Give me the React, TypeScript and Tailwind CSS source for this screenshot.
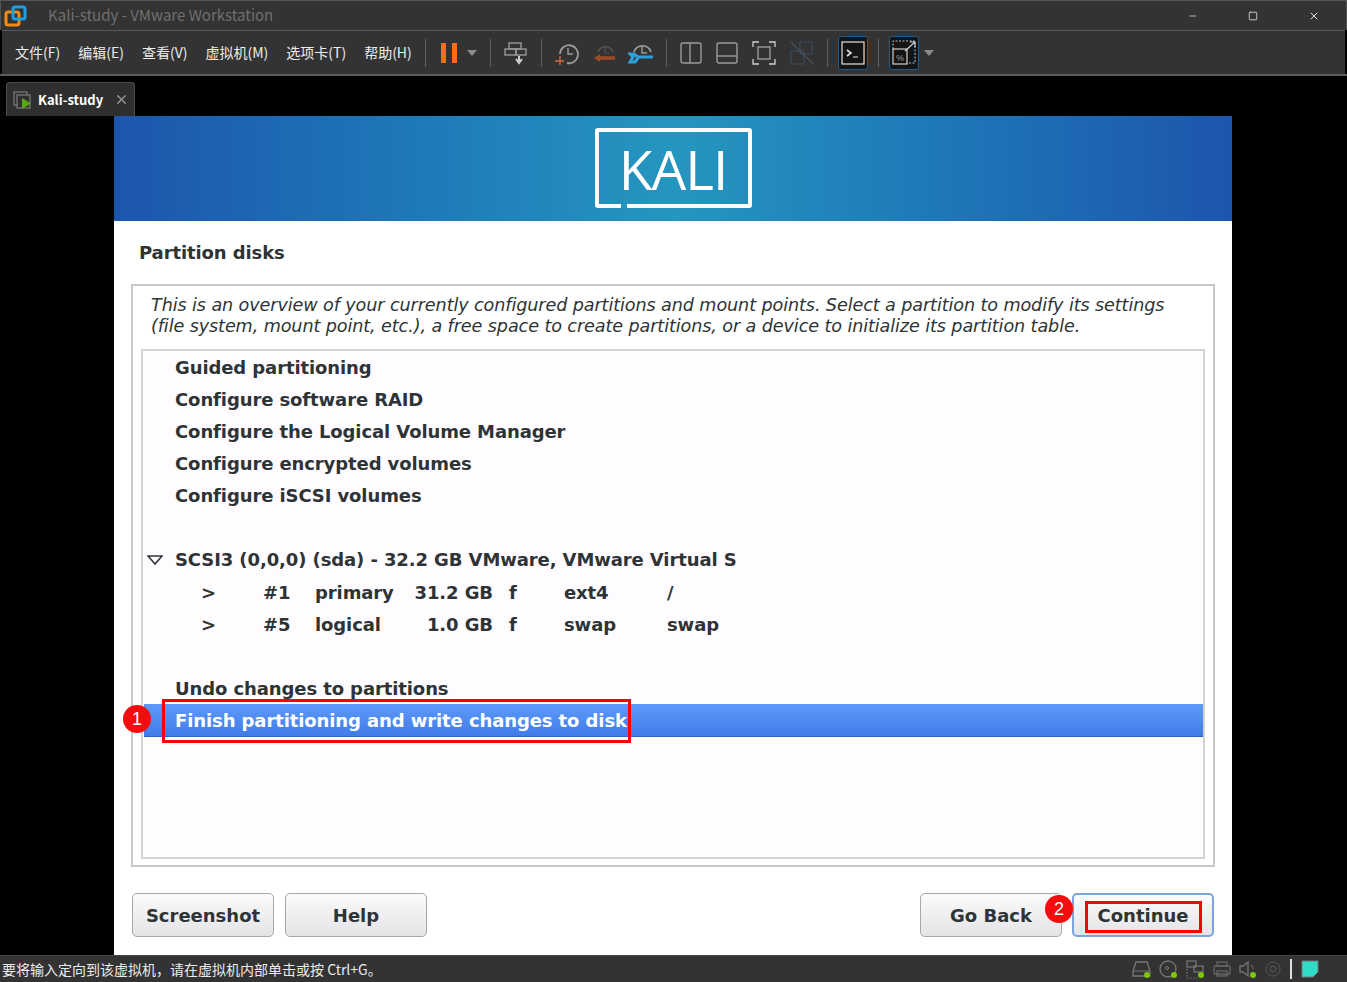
import React from 'react';
import { Minus, Square, X } from 'lucide-react';

const KALI_FONT = "font-['DejaVu_Sans',sans-serif]";
const UI_FONT = "font-['Noto_Sans_CJK_SC','Liberation_Sans',sans-serif]";

const Sep = () => <div className="w-px h-[28px] bg-[#5f5f5f] mx-[9px]" />;

const ic = { fill: 'none', stroke: '#9a9a9a', strokeWidth: 1.4 };

const ToolIcon = ({ children, w = 26 }: { children: React.ReactNode; w?: number }) => (
    <svg width={w} height="26" viewBox={`0 0 ${w} 26`} className="shrink-0">{children}</svg>
);

const Caret = () => (
    <svg width="10" height="6" viewBox="0 0 10 6" className="shrink-0"><path d="M0 0h10L5 6z" fill="#8a8a8a" /></svg>
);

const menus = ['文件(F)', '编辑(E)', '查看(V)', '虚拟机(M)', '选项卡(T)', '帮助(H)'];

const Toolbar = () => (
    <div className="h-[46px] mx-[2px] flex items-center bg-[#333333] border-t border-[#575757] pl-[13px]">
        <div className="flex items-center gap-[18px] text-[14px] text-[#ececec]">
            {menus.map((m) => <span key={m}>{m}</span>)}
        </div>
        <div className="w-px h-[28px] bg-[#5f5f5f] ml-[13px]" />
        <div className="flex gap-[6px] ml-[15px] mr-[10px]">
            <div className="w-[5px] h-[20px] bg-[#ff6a13]" />
            <div className="w-[5px] h-[20px] bg-[#ff6a13]" />
        </div>
        <Caret />
        <div className="w-px h-[28px] bg-[#5f5f5f] ml-[13px] mr-[13px]" />
        <ToolIcon w={24}>
            <g {...ic}><rect x="5" y="3" width="12" height="6" /><rect x="1" y="9" width="11" height="6" /><rect x="12" y="9" width="10" height="6" /></g>
            <path d="M15 16v5M12 19l3 4 3-4" stroke="#cfcfcf" strokeWidth="2" fill="none" />
        </ToolIcon>
        <div className="w-px h-[28px] bg-[#5f5f5f] ml-[13px] mr-[12px]" />
        <div className="flex items-center gap-[11px]">
            <ToolIcon>
                <path d="M6 14a9 9 0 1 1 7 9" {...ic} strokeWidth={1.8} /><path d="M14 8v6h5" {...ic} />
                <path d="M6 16v9M1 21h9" stroke="#d2693a" strokeWidth="1.4" />
            </ToolIcon>
            <ToolIcon>
                <path d="M7 12a8 8 0 0 1 15 0" fill="none" stroke="#555" strokeWidth="1.6" /><path d="M14 7v6h4" fill="none" stroke="#555" strokeWidth="1.2" />
                <path d="M24 18H8" stroke="#a04a22" strokeWidth="3.5" /><path d="M9 14l-6 4 6 4z" fill="#a04a22" />
            </ToolIcon>
            <ToolIcon>
                <path d="M6 12a9 9 0 0 1 17 0" {...ic} strokeWidth={1.8} /><path d="M14 6v7h5" {...ic} />
                <path d="M25 17H10M10 17l-4-3H2l3 3-3 5h5l3-4" stroke="#2f9fdc" strokeWidth="3" fill="none" />
            </ToolIcon>
        </div>
        <div className="w-px h-[28px] bg-[#5f5f5f] ml-[12px] mr-[13px]" />
        <div className="flex items-center gap-[14px]">
            <ToolIcon w={22}><rect x="1" y="3" width="20" height="20" rx="2" {...ic} /><path d="M10 3v20" {...ic} /></ToolIcon>
            <ToolIcon w={22}><rect x="1" y="3" width="20" height="20" rx="2" {...ic} /><path d="M1 16h20" {...ic} /></ToolIcon>
            <ToolIcon w={24}>
                <path d="M1 7V2h6M17 2h6v5M23 19v5h-6M7 24H1v-5" fill="none" stroke="#d0d0d0" strokeWidth="1.3" />
                <rect x="6" y="7" width="12" height="12" {...ic} />
            </ToolIcon>
            <ToolIcon w={24}>
                <g fill="none" stroke="#3a4855" strokeWidth="1.3"><rect x="10" y="2" width="12" height="12" /><rect x="1" y="11" width="13" height="13" /></g>
                <path d="M1 2l22 22" stroke="#46505a" strokeWidth="1.3" />
            </ToolIcon>
        </div>
        <div className="w-px h-[28px] bg-[#5f5f5f] ml-[13px] mr-[10px]" />
        <div className="w-[30px] h-[34px] rounded-[3px] border border-[#1c5c8e] bg-[#141414] flex items-center justify-center">
            <svg width="24" height="24" viewBox="0 0 24 24">
                <rect x="1" y="1" width="22" height="22" fill="none" stroke="#e0e0e0" strokeWidth="1.2" />
                <path d="M6 9l4 3-4 3" fill="none" stroke="#e0e0e0" strokeWidth="1.6" /><path d="M12 16h5" stroke="#c0c0c0" strokeWidth="1.2" />
            </svg>
        </div>
        <div className="w-px h-[28px] bg-[#5f5f5f] ml-[10px] mr-[10px]" />
        <div className="w-[30px] h-[34px] rounded-[3px] border border-[#1c5c8e] bg-[#141414] flex items-center justify-center mr-[5px]">
            <svg width="24" height="26" viewBox="0 0 24 26">
                <path d="M1 9V1h22v22h-8" fill="none" stroke="#bdbdbd" strokeWidth="1" strokeDasharray="2 1.5" />
                <rect x="1" y="9" width="14" height="15" fill="none" stroke="#cfcfcf" strokeWidth="1.2" />
                <path d="M13 11L23 2M18 2h5v5" fill="none" stroke="#cfcfcf" strokeWidth="1.1" />
                <text x="4" y="21" fontSize="9" fill="#9a9a9a" fontFamily="'Liberation Sans',sans-serif">%</text>
            </svg>
        </div>
        <Caret />
    </div>
);

const Row = ({ children }: { children: React.ReactNode }) => (
    <div className="h-[32px] pl-[32px] flex items-center whitespace-pre">{children}</div>
);

const Part = ({ n, kind, size, fs, mount }: { n: string; kind: string; size: string; fs: string; mount: string }) => (
    <div className="h-[32px] flex items-center whitespace-pre">
        <span className="w-[120px] pl-[58px]">&gt;</span>
        <span className="w-[52px]">{n}</span>
        <span className="w-[89px]">{kind}</span>
        <span className="w-[89px] text-right">{size}</span>
        <span className="w-[55px] pl-[16px] box-content">f</span>
        <span className="w-[103px]">{fs}</span>
        <span>{mount}</span>
    </div>
);

const KaliButton = ({ label, focused, className }: { label: string; focused?: boolean; className?: string }) => (
    <div
        className={`w-[142px] h-[44px] rounded-[5px] border bg-gradient-to-b from-[#fbfbfb] to-[#e4e3e6] flex items-center justify-center text-[18px] font-bold text-[#2e3436] ${
            focused ? 'border-2 border-[#7ba4dc]' : 'border-[#a8a8a8]'
        } ${className ?? ''}`}
    >
        {label}
    </div>
);

const Badge = ({ n, className }: { n: string; className: string }) => (
    <div className={`absolute w-[28px] h-[28px] rounded-full bg-[#f60c0c] text-white text-[18px] flex items-center justify-center font-['Liberation_Sans',sans-serif] ${className}`}>
        {n}
    </div>
);

const KaliScreen = () => (
    <div className={`relative w-[1118px] h-[839px] bg-white ${KALI_FONT}`}>
        {/* banner */}
        <div className="h-[105px] bg-gradient-to-r from-[#1d55ad] via-[#2596bf] to-[#1d55ad] flex items-center justify-center">
            <div className="relative w-[157px] h-[80px] mt-[-1px] rounded-[3px] border-[4px] border-white flex items-center justify-center">
                <span className="text-white text-[55px] leading-none font-['Open_Sans',sans-serif] tracking-[-1px]">KALI</span>
                <div className="absolute left-[22px] bottom-[-4px] w-[6px] h-[4px] bg-[#2596bf]" />
            </div>
        </div>

        <h1 className="h-[63px] pl-[25px] flex items-center text-[18px] font-bold text-[#2e3436] tracking-[-0.1px]">Partition disks</h1>

        <div className="mx-[17px] h-[583px] border-2 border-[#c8c8c8] px-[8px] pt-[9px] pb-[6px] flex flex-col">
            <p className="pl-[10px] pr-[10px] text-[17.6px] leading-[21px] italic text-[#2e3436] h-[54px] tracking-[-0.1px]">
                This is an overview of your currently configured partitions and mount points. Select a partition to modify its settings (file system, mount point, etc.), a free space to create partitions, or a device to initialize its partition table.
            </p>
            <div className="flex-1 border-2 border-[#d3d3d3] pt-[0px] text-[18px] font-bold text-[#2e3436] bg-[#fefcff] tracking-[-0.1px]">
                <Row>Guided partitioning</Row>
                <Row>Configure software RAID</Row>
                <Row>Configure the Logical Volume Manager</Row>
                <Row>Configure encrypted volumes</Row>
                <Row>Configure iSCSI volumes</Row>
                <div className="h-[32px]" />
                <div className="h-[33px] flex items-center whitespace-pre">
                    <svg width="16" height="10" viewBox="0 0 16 10" className="ml-[4px] mr-[12px] shrink-0"><path d="M1 1h14L8 9z" fill="none" stroke="#2e3436" strokeWidth="1.6" /></svg>
                    SCSI3 (0,0,0) (sda) - 32.2 GB VMware, VMware Virtual S
                </div>
                <Part n="#1" kind="primary" size="31.2 GB" fs="ext4" mount="/" />
                <Part n="#5" kind="logical" size="1.0 GB" fs="swap" mount="swap" />
                <div className="h-[32px]" />
                <Row>Undo changes to partitions</Row>
                <div className="h-[33px] ml-[1px] pl-[31px] flex items-center whitespace-pre text-white bg-gradient-to-b from-[#5f9afa] to-[#3f7ce8] border-b border-[#2f66c9]">
                    Finish partitioning and write changes to disk
                </div>
            </div>
        </div>

        <div className="mx-[18px] mt-[26px] flex">
            <KaliButton label="Screenshot" />
            <KaliButton label="Help" className="ml-[11px]" />
            <div className="flex-1" />
            <KaliButton label="Go Back" />
            <KaliButton label="Continue" focused className="ml-[10px]" />
        </div>

        {/* annotations */}
        <div className="absolute left-[48px] top-[583px] w-[469px] h-[44px] border-[3px] border-[#fb0007]" />
        <div className="absolute left-[971px] top-[785px] w-[117px] h-[32px] border-[3px] border-[#fb0007]" />
        <Badge n="1" className="left-[9px] top-[589px]" />
        <Badge n="2" className="left-[931px] top-[779px]" />
    </div>
);

const StatusIcons = () => (
    <div className="flex items-center gap-[7px] mr-[3px]">
        <svg width="20" height="20" viewBox="0 0 20 20"><path d="M4 3h11l3 9v5H1v-5z" fill="none" stroke="#777" strokeWidth="1.3" /><path d="M1 12h17" stroke="#777" /><circle cx="15" cy="16" r="3" fill="#7ac70c" /></svg>
        <svg width="20" height="20" viewBox="0 0 20 20"><circle cx="9" cy="10" r="8" fill="none" stroke="#777" strokeWidth="1.3" /><circle cx="8" cy="9" r="1.5" fill="none" stroke="#777" /><circle cx="15" cy="16" r="3" fill="#7ac70c" /></svg>
        <svg width="20" height="20" viewBox="0 0 20 20"><g fill="none" stroke="#777" strokeWidth="1.2"><rect x="1" y="2" width="9" height="6" /><rect x="8" y="7" width="9" height="6" /><path d="M1 19h10M1 10v8" strokeDasharray="1.5 1.5" /></g><circle cx="15" cy="16" r="3" fill="#7ac70c" /></svg>
        <svg width="18" height="20" viewBox="0 0 18 20"><g fill="none" stroke="#666" strokeWidth="1.3"><rect x="1" y="7" width="16" height="8" rx="1" /><rect x="4" y="3" width="10" height="4" /><rect x="4" y="12" width="10" height="5" /></g></svg>
        <svg width="20" height="20" viewBox="0 0 20 20"><path d="M2 7h3l5-4v14l-5-4H2z" fill="none" stroke="#777" strokeWidth="1.3" /><path d="M13 6q2 1 2 4" fill="none" stroke="#777" /><circle cx="15" cy="16" r="3" fill="#7ac70c" /></svg>
        <svg width="16" height="20" viewBox="0 0 16 20"><circle cx="8" cy="10" r="7" fill="none" stroke="#5a5a5a" /><circle cx="8" cy="10" r="3" fill="none" stroke="#5a5a5a" /></svg>
    </div>
);

export default function App() {
    return (
        <div className={`w-[1347px] h-[982px] bg-black overflow-hidden flex flex-col ${UI_FONT}`}>
            {/* title bar */}
            <div className="h-[30px] shrink-0 bg-[#333333] border-t border-l border-r border-[#555] flex items-center">
                <svg width="24" height="24" viewBox="0 0 24 24" className="ml-[3px] shrink-0">
                    <rect x="2" y="8" width="13" height="13" rx="2" fill="none" stroke="#f28b16" strokeWidth="3" />
                    <rect x="9" y="3" width="12" height="12" rx="2" fill="none" stroke="#1e9fe0" strokeWidth="3" />
                </svg>
                <span className="ml-[20px] text-[15px] text-[#6f6f6f]">Kali-study - VMware Workstation</span>
                <div className="flex-1" />
                <Minus size={10} className="text-[#cfcfcf] mr-[50px]" />
                <Square size={10} className="text-[#e0e0e0] mr-[50px]" />
                <X size={12} className="text-[#e0e0e0] mr-[26px]" />
            </div>

            <Toolbar />
            <div className="h-[2px] shrink-0 bg-[#5a5a5a]" />

            {/* tabs + guest */}
            <div className="flex-1 relative bg-black">
                <div className="absolute left-[6px] top-[6px] w-[129px] h-[34px] bg-[#2f2f2f] border border-b-0 border-[#4a4a4a] rounded-t-[4px] flex items-center pl-[6px]">
                    <svg width="20" height="20" viewBox="0 0 20 20" className="shrink-0">
                        <rect x="1" y="2" width="13" height="13" fill="none" stroke="#8a8a8a" />
                        <rect x="4" y="5" width="13" height="13" fill="#2f2f2f" stroke="#8a8a8a" />
                        <path d="M9 8l9 5.5-9 5.5z" fill="#58a80e" />
                    </svg>
                    <span className="ml-[5px] text-[13px] font-bold text-white">Kali-study</span>
                    <X size={15} className="ml-[11px] text-[#9a9a9a]" />
                </div>
                <div className="pl-[114px] pt-[40px]"><KaliScreen /></div>
            </div>

            {/* status bar */}
            <div className="h-[27px] shrink-0 bg-[#333333] border-t border-[#444] flex items-center text-[14px] text-[#ececec] pl-[2px]">
                <span>要将输入定向到该虚拟机，请在虚拟机内部单击或按 Ctrl+G。</span>
                <div className="flex-1" />
                <StatusIcons />
                <div className="w-[2px] h-[20px] bg-[#e0e0e0] ml-[6px] mr-[9px]" />
                <svg width="18" height="18" viewBox="0 0 18 18" className="mr-[28px] shrink-0">
                    <path d="M1 1h16v11l-5 5H1z" fill="#2edcc8" stroke="#777" strokeWidth="1" />
                </svg>
            </div>
        </div>
    );
}
